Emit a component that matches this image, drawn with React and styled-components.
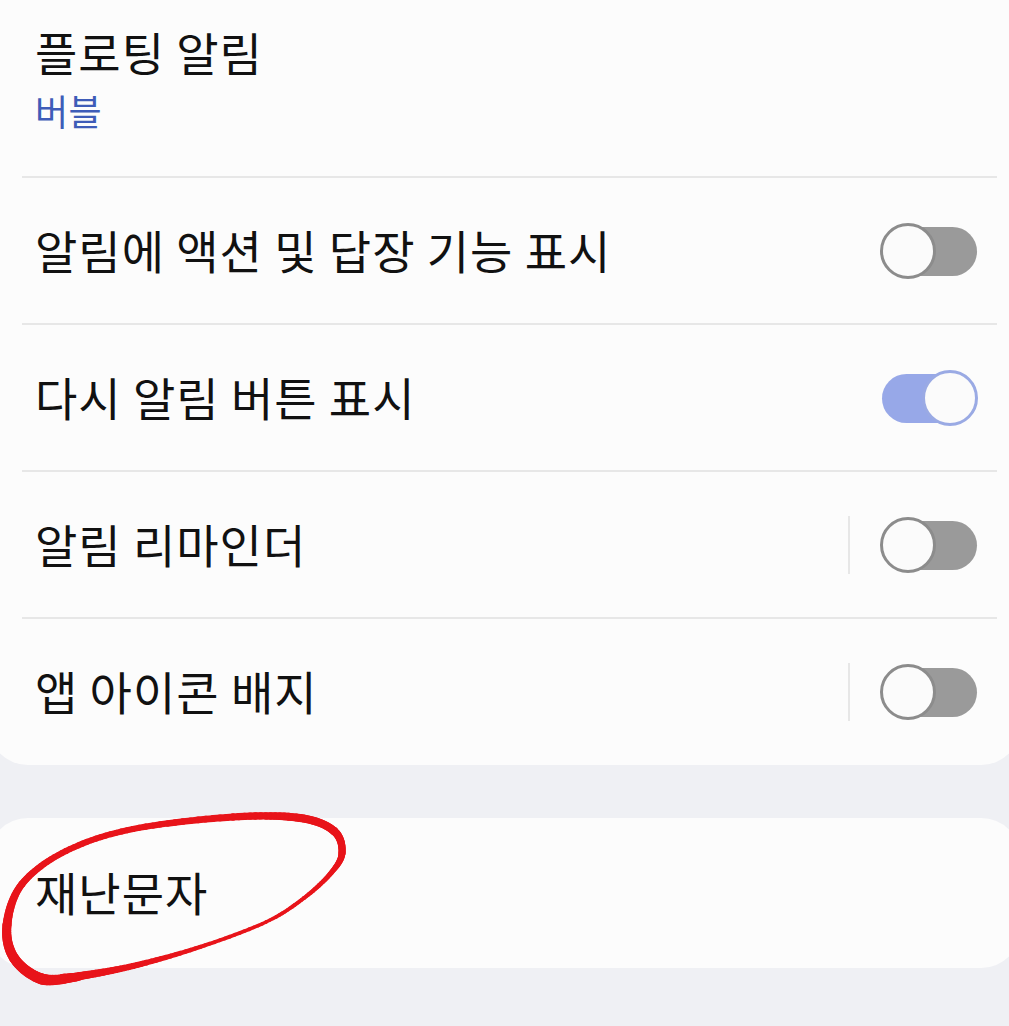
import React from "react";
import styled, { createGlobalStyle } from "styled-components";

const Global = createGlobalStyle`
  html, body { margin: 0; padding: 0; }
  body {
    background: #eff0f4;
    font-family: "Noto Sans CJK KR", "Noto Sans", sans-serif;
    overflow: hidden;
  }
`;

const Page = styled.div`
  position: relative;
  width: 1009px;
  height: 1026px;
  overflow: hidden;
  background: #eff0f4;
`;

const Card = styled.section`
  margin: ${(p) => p.$top} -12px 0 -12px;
  background: #fcfcfc;
  border-radius: 40px;
  display: flex;
  flex-direction: column;
`;

const Header = styled.div`
  height: 176px;
  margin-top: 40px;
  box-sizing: border-box;
  padding: 23px 0 0 47px;
  display: flex;
  flex-direction: column;
`;

const Title = styled.div`
  font-size: 46px;
  line-height: 56px;
  color: #111;
  letter-spacing: 1px;
`;

const Sub = styled.div`
  margin-top: 9px;
  font-size: 36px;
  line-height: 44px;
  color: #3e5cb8;
  letter-spacing: 0.5px;
`;

const Divider = styled.div`
  height: 2px;
  background: #e7e7e7;
  margin: 0 24px 0 34px;
`;

const Row = styled.div`
  height: ${(p) => p.$h || 145}px;
  box-sizing: border-box;
  display: flex;
  align-items: center;
  padding: 0 43px 0 47px;
`;

const Label = styled.div`
  flex: 1;
  font-size: 46px;
  line-height: 56px;
  padding-bottom: 4px;
  color: #111;
  letter-spacing: 1px;
`;

const VLine = styled.div`
  width: 2px;
  height: 58px;
  background: #e7e7e7;
  margin-right: 30px;
`;

const SwitchBox = styled.div`
  position: relative;
  width: 98px;
  height: 56px;
  flex-shrink: 0;
`;

const Track = styled.div`
  position: absolute;
  left: 2px;
  top: 4px;
  width: 95px;
  height: 49px;
  border-radius: 25px;
  background: ${(p) => (p.$on ? "#97a8e8" : "#9a9a9a")};
`;

const Thumb = styled.div`
  position: absolute;
  top: 0;
  left: ${(p) => (p.$on ? "42px" : "0")};
  width: 56px;
  height: 56px;
  box-sizing: border-box;
  border-radius: 50%;
  background: #fbfbfb;
  border: 3px solid ${(p) => (p.$on ? "#9aaae4" : "#8c8c8c")};
`;

const Mark = styled.svg`
  position: absolute;
  left: 0;
  top: 0;
  pointer-events: none;
`;

function Switch({ on }) {
  return (
    <SwitchBox>
      <Track $on={on} />
      <Thumb $on={on} />
    </SwitchBox>
  );
}

// control points of the hand-drawn red circle with pen width at each point
const PTS = [
  [78, 977, 8], [42, 979, 11], [14, 958, 10], [7, 925, 9], [22, 884, 7],
  [66, 851, 6], [133, 829, 6], [233, 817, 7], [300, 818, 8], [334, 831, 8],
  [342, 853, 7], [331, 873, 5], [304, 898, 4], [266, 922, 3.5], [200, 947, 4],
  [133, 966, 6], [80, 976, 8], [62, 977, 6],
];

function catmull(p0, p1, p2, p3, t) {
  const t2 = t * t;
  const t3 = t2 * t;
  return 0.5 * (2 * p1 + (-p0 + p2) * t + (2 * p0 - 5 * p1 + 4 * p2 - p3) * t2 + (-p0 + 3 * p1 - 3 * p2 + p3) * t3);
}

function buildSegments() {
  const segs = [];
  const n = PTS.length;
  const steps = 14;
  let prev = null;
  for (let i = 0; i < n - 1; i++) {
    const a = PTS[Math.max(i - 1, 0)];
    const b = PTS[i];
    const c = PTS[i + 1];
    const d = PTS[Math.min(i + 2, n - 1)];
    for (let s = 0; s <= steps; s++) {
      const t = s / steps;
      const x = catmull(a[0], b[0], c[0], d[0], t);
      const y = catmull(a[1], b[1], c[1], d[1], t);
      const w = b[2] + (c[2] - b[2]) * t;
      if (prev) segs.push({ x1: prev.x, y1: prev.y, x2: x, y2: y, w });
      prev = { x, y };
    }
  }
  return segs;
}

const SEGMENTS = buildSegments();

function Annotation() {
  return (
    <Mark width="1009" height="1026" viewBox="0 0 1009 1026">
      <g stroke="#e8141a" strokeLinecap="round">
        {SEGMENTS.map((s, i) => (
          <line key={i} x1={s.x1} y1={s.y1} x2={s.x2} y2={s.y2} strokeWidth={s.w} />
        ))}
      </g>
    </Mark>
  );
}

export default function App() {
  return (
    <>
      <Global />
      <Page>
        <Card $top="-40px">
          <Header>
            <Title>플로팅 알림</Title>
            <Sub>버블</Sub>
          </Header>
          <Divider />
          <Row>
            <Label>알림에 액션 및 답장 기능 표시</Label>
            <Switch />
          </Row>
          <Divider />
          <Row>
            <Label>다시 알림 버튼 표시</Label>
            <Switch on />
          </Row>
          <Divider />
          <Row>
            <Label>알림 리마인더</Label>
            <VLine />
            <Switch />
          </Row>
          <Divider />
          <Row $h={146}>
            <Label>앱 아이콘 배지</Label>
            <VLine />
            <Switch />
          </Row>
        </Card>
        <Card $top="53px">
          <Row $h={150}>
            <Label>재난문자</Label>
          </Row>
        </Card>
        <Annotation />
      </Page>
    </>
  );
}
